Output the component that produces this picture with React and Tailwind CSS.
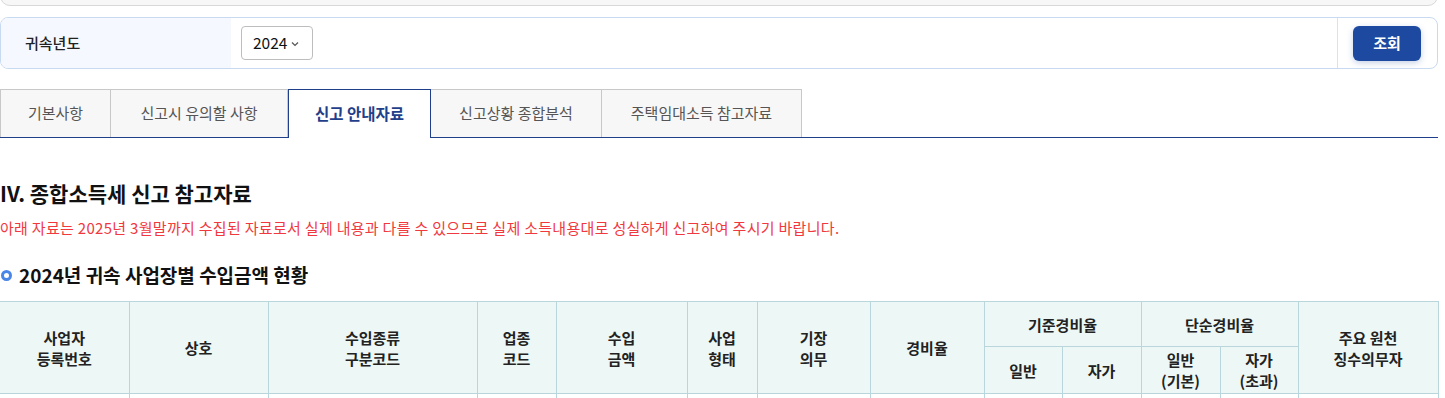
import React from "react";

const th = "border border-[#b9d6dd] bg-[#edf7f6] text-center align-middle font-semibold text-[15px] leading-[21px] text-[#222]";

export default function App() {
  return (
    <div className="w-[1445px] h-[398px] overflow-hidden bg-white" style={{ fontFamily: '"Noto Sans CJK KR", "Noto Sans", sans-serif' }}>
      <div className="w-[1438px]">
        <div className="h-[4px] mt-[-10px] pt-[10px] box-content border border-[#d8d8d8] bg-[#f7f7f7] rounded-b-[10px]"></div>
        <div className="mt-[11px] h-[52px] flex border border-[#c8daf1] rounded-[8px] overflow-hidden">
          <div className="w-[230px] bg-[#f5f8fe] flex items-center pl-[24px] text-[15px] font-medium text-[#222]">귀속년도</div>
          <div className="flex-1 flex items-center pl-[10px]">
            <div className="h-[34px] w-[72px] border border-[#bdbdbd] rounded-[4px] flex items-center pl-[11px] gap-[4px] text-[15.5px] text-[#111]">
              <span>2024</span>
              <svg width="8" height="6" viewBox="0 0 8 6" className="mt-[1px]"><path d="M1 1.5 L4 4.5 L7 1.5" fill="none" stroke="#555" strokeWidth="1.2" /></svg>
            </div>
          </div>
          <div className="w-[100px] border-l border-[#d5e3f4] flex items-center pl-[15px]">
            <button className="w-[68px] h-[35px] rounded-[6px] bg-[#1d4aa0] text-white text-[15px] font-semibold shadow-[0_2px_6px_rgba(29,74,160,0.25)]">조회</button>
          </div>
        </div>
        <div className="mt-[20px] flex border-b border-[#1f3f8a] h-[49px]">
          <div className="w-[111px] h-[48px] bg-[#f7f7f7] border border-b-0 border-[#c8c8c8] flex items-center justify-center text-[15px] text-[#555]">기본사항</div>
          <div className="w-[177px] h-[48px] bg-[#f7f7f7] border border-l-0 border-b-0 border-[#c8c8c8] flex items-center justify-center text-[15px] text-[#555]">신고시 유의할 사항</div>
          <div className="w-[143px] h-[49px] bg-white border border-b-0 border-[#1f3f8a] flex items-center justify-center text-[15.5px] font-bold text-[#1f3f8a] relative z-10">신고 안내자료</div>
          <div className="w-[171px] h-[48px] bg-[#f7f7f7] border border-l-0 border-b-0 border-[#c8c8c8] flex items-center justify-center text-[15px] text-[#555]">신고상황 종합분석</div>
          <div className="w-[200px] h-[48px] bg-[#f7f7f7] border border-l-0 border-b-0 border-[#c8c8c8] flex items-center justify-center text-[15px] text-[#555]">주택임대소득 참고자료</div>
        </div>
        <div className="mt-[41px] text-[21px] leading-[28px] font-semibold text-[#111]">IV. 종합소득세 신고 참고자료</div>
        <div className="mt-[11px] text-[15px] leading-[20px] tracking-[0.3px] text-[#f0383e]">아래 자료는 2025년 3월말까지 수집된 자료로서 실제 내용과 다를 수 있으므로 실제 소득내용대로 성실하게 신고하여 주시기 바랍니다.</div>
        <div className="mt-[24px] flex items-center gap-[7px]">
          <span className="w-[11px] h-[11px] rounded-full border-[3px] border-[#4a86e8] ml-[1px]"></span>
          <span className="text-[19px] leading-[26px] font-semibold text-[#111]">2024년 귀속 사업장별 수입금액 현황</span>
        </div>
        <table className="mt-[13px] w-[1438px] table-fixed border-collapse">
          <colgroup>
            <col className="w-[129px]" />
            <col className="w-[139px]" />
            <col className="w-[209px]" />
            <col className="w-[79px]" />
            <col className="w-[131px]" />
            <col className="w-[70px]" />
            <col className="w-[113px]" />
            <col className="w-[114px]" />
            <col className="w-[78px]" />
            <col className="w-[79px]" />
            <col className="w-[79px]" />
            <col className="w-[78px]" />
            <col className="w-[140px]" />
          </colgroup>
          <thead>
            <tr className="h-[45px]">
              <th rowSpan={2} className={th + " border-l-0"}>사업자<br />등록번호</th>
              <th rowSpan={2} className={th}>상호</th>
              <th rowSpan={2} className={th}>수입종류<br />구분코드</th>
              <th rowSpan={2} className={th}>업종<br />코드</th>
              <th rowSpan={2} className={th}>수입<br />금액</th>
              <th rowSpan={2} className={th}>사업<br />형태</th>
              <th rowSpan={2} className={th}>기장<br />의무</th>
              <th rowSpan={2} className={th}>경비율</th>
              <th colSpan={2} className={th}>기준경비율</th>
              <th colSpan={2} className={th}>단순경비율</th>
              <th rowSpan={2} className={th}>주요 원천<br />징수의무자</th>
            </tr>
            <tr className="h-[47px]">
              <th className={th}>일반</th>
              <th className={th}>자가</th>
              <th className={th}>일반<br />(기본)</th>
              <th className={th}>자가<br />(초과)</th>
            </tr>
          </thead>
          <tbody>
            <tr className="h-[40px]">
              {Array.from({ length: 13 }).map((_, i) => (
                <td key={i} className={"border border-[#b9d6dd]" + (i === 0 ? " border-l-0" : "")}></td>
              ))}
            </tr>
          </tbody>
        </table>
      </div>
    </div>
  );
}
